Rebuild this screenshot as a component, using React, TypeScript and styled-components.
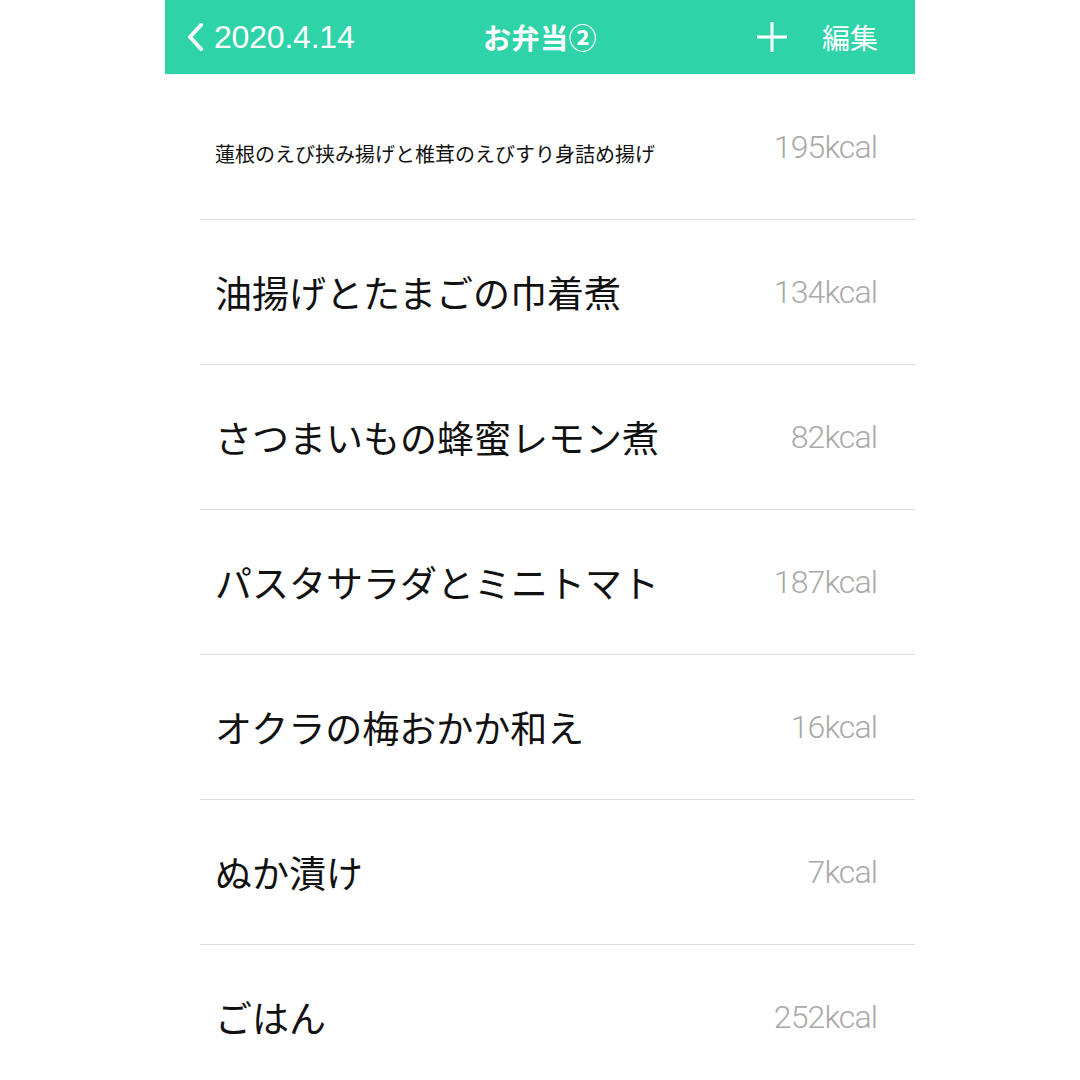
import styled, { createGlobalStyle } from "styled-components";

const items = [
  { name: "蓮根のえび挟み揚げと椎茸のえびすり身詰め揚げ", kcal: 195, small: true },
  { name: "油揚げとたまごの巾着煮", kcal: 134 },
  { name: "さつまいもの蜂蜜レモン煮", kcal: 82 },
  { name: "パスタサラダとミニトマト", kcal: 187 },
  { name: "オクラの梅おかか和え", kcal: 16 },
  { name: "ぬか漬け", kcal: 7 },
  { name: "ごはん", kcal: 252 },
];

export default function App() {
  return (
    <>
      <GlobalStyle />
      <Screen>
        <Header>
          <Back>
            <svg width="17" height="28" viewBox="0 0 17 28">
              <path d="M14 2 L3 14 L14 26" fill="none" stroke="#fff" strokeWidth="4" strokeLinecap="round" strokeLinejoin="round" />
            </svg>
            <DateText>2020.4.14</DateText>
          </Back>
          <Title>お弁当②</Title>
          <Actions>
            <svg width="32" height="32" viewBox="0 0 32 32">
              <path d="M16 1 V31 M1 16 H31" stroke="#fff" strokeWidth="3" />
            </svg>
            <Edit>編集</Edit>
          </Actions>
        </Header>
        <List>
          {items.map((it, i) => (
            <Row key={i} $last={i === items.length - 1}>
              <Name $small={it.small}>{it.name}</Name>
              <Kcal>{it.kcal}kcal</Kcal>
            </Row>
          ))}
        </List>
      </Screen>
    </>
  );
}

const GlobalStyle = createGlobalStyle`
  html, body {
    margin: 0;
    padding: 0;
    background: #fff;
  }
  body {
    font-family: "Noto Sans CJK JP", "Noto Sans", sans-serif;
  }
`;

const Screen = styled.div`
  width: 750px;
  height: 1080px;
  margin: 0 auto;
  overflow: hidden;
  background: #fff;
`;

const Header = styled.header`
  height: 74px;
  background: #2fd3a8;
  display: grid;
  grid-template-columns: 1fr auto 1fr;
  align-items: center;
  padding: 0 37px;
  color: #fff;
`;

const Back = styled.div`
  display: flex;
  align-items: center;
  gap: 10px;
  margin-left: -15px;
`;

const DateText = styled.span`
  font-family: "Liberation Sans", Arial, sans-serif;
  font-size: 32px;
  letter-spacing: -0.2px;
`;

const Title = styled.div`
  font-family: "Noto Sans CJK JP", sans-serif;
  font-weight: 700;
  font-size: 28px;
  letter-spacing: 0.5px;
`;

const Actions = styled.div`
  display: flex;
  align-items: center;
  justify-content: flex-end;
  gap: 34px;
`;

const Edit = styled.span`
  font-family: "Noto Sans CJK JP", sans-serif;
  font-size: 28px;
`;

const List = styled.div`
  display: flex;
  flex-direction: column;
  padding: 1px 0 0 35px;
`;

const Row = styled.div<{ $last?: boolean }>`
  height: 144px;
  display: flex;
  align-items: center;
  justify-content: space-between;
  padding: 0 38px 0 15px;
  border-bottom: 1px solid ${({ $last }) => ($last ? "transparent" : "#dcdcdc")};
`;

const Name = styled.div<{ $small?: boolean }>`
  font-size: ${({ $small }) => ($small ? "20px" : "37px")};
  color: #111;
  white-space: nowrap;
  padding-top: ${({ $small }) => ($small ? "12px" : "0")};
`;

const Kcal = styled.div`
  font-family: Roboto, "Liberation Sans", sans-serif;
  font-weight: 300;
  font-size: 32px;
  letter-spacing: -0.9px;
  color: #a9a9a9;
`;
